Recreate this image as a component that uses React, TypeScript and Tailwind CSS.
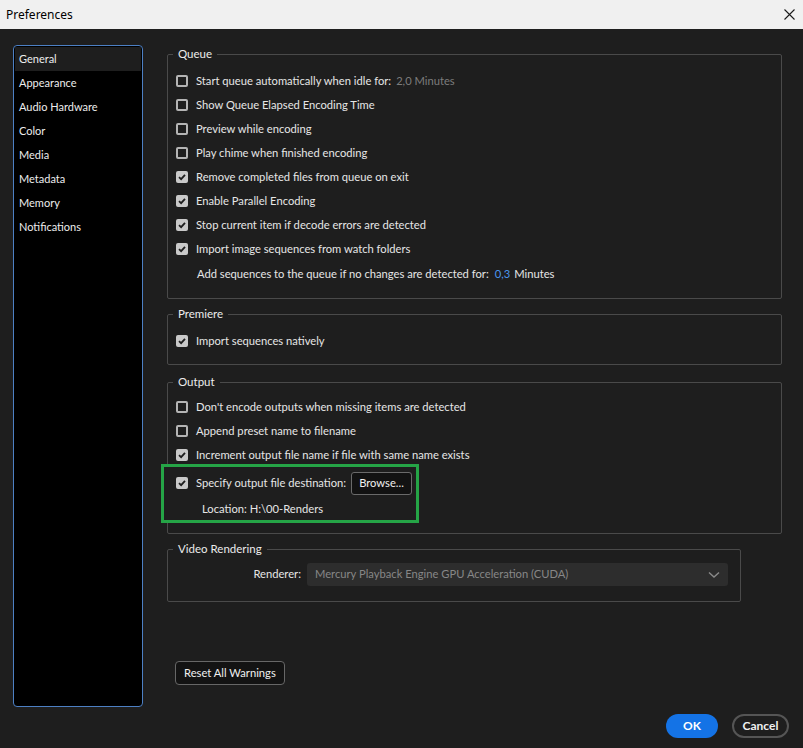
import type { ReactNode } from 'react';

const FONT = "font-['Lato','Noto_Sans',sans-serif]";

function Box({ checked }: { checked?: boolean }) {
    if (checked) {
        return (
            <span className="w-[12px] h-[12px] rounded-[2px] bg-[#c9c9c9] flex items-center justify-center shrink-0">
                <svg width="10" height="10" viewBox="0 0 10 10">
                    <path d="M2 5.2 L4.1 7.2 L8 2.8" stroke="#1e1e1e" strokeWidth="1.8" fill="none" />
                </svg>
            </span>
        );
    }
    return <span className="w-[12px] h-[12px] rounded-[2px] border-2 border-[#b4b4b4] bg-[#1e1e1e] shrink-0" />;
}

function Row({ checked, children }: { checked?: boolean; children: ReactNode }) {
    return (
        <div className="h-[24px] flex items-center">
            <Box checked={checked} />
            <span className="ml-[8px] text-[11.2px] text-[#e6e6e6] whitespace-nowrap">{children}</span>
        </div>
    );
}

function Group({ title, className, children }: { title: string; className?: string; children: ReactNode }) {
    return (
        <fieldset className={`border border-[#4a4a4a] rounded-[2px] px-[8px] ${className ?? ''}`}>
            <legend className="-ml-[3px] px-[5px] h-[16px] leading-[16px] text-[11.5px] text-[#ececec]">{title}</legend>
            {children}
        </fieldset>
    );
}

const SIDEBAR = ['General', 'Appearance', 'Audio Hardware', 'Color', 'Media', 'Metadata', 'Memory', 'Notifications'];

export default function App() {
    return (
        <div className={`w-[803px] h-[748px] flex flex-col ${FONT}`}>
            {/* title bar */}
            <div className="h-[29px] bg-[#f0f0f0] flex items-center justify-between pl-[6px] pr-[8px]">
                <span className="text-[12px] text-black font-['Noto_Sans',sans-serif]">Preferences</span>
                <svg width="11" height="11" viewBox="0 0 11 11">
                    <path d="M0.5 0.5 L10.5 10.5 M10.5 0.5 L0.5 10.5" stroke="#1a1a1a" strokeWidth="1.1" />
                </svg>
            </div>

            <div className="flex-1 bg-[#1e1e1e] flex flex-col">
                <div className="flex pt-[16px]">
                    {/* sidebar */}
                    <div className="ml-[13px] w-[130px] h-[662px] bg-black border border-[#4d80c4] rounded-[4px] p-[1px] shrink-0">
                        {SIDEBAR.map((s, i) => (
                            <div key={s} className={`h-[24px] flex items-center pl-[4px] text-[11px] text-[#ededed] ${i === 0 ? 'bg-[#1e1e1e]' : ''}`}>
                                {s}
                            </div>
                        ))}
                    </div>

                    {/* main */}
                    <div className="ml-[24px] w-[615px] pt-[1px] flex flex-col">
                        <Group title="Queue" className="pt-[7px] pb-[10px]">
                            <div className="h-[24px] flex items-center">
                                <Box />
                                <span className="ml-[8px] text-[11.2px] text-[#e6e6e6]">Start queue automatically when idle for:</span>
                                <span className="ml-[5px] text-[11.2px] text-[#7c7c7c]">2,0 Minutes</span>
                            </div>
                            <Row>Show Queue Elapsed Encoding Time</Row>
                            <Row>Preview while encoding</Row>
                            <Row>Play chime when finished encoding</Row>
                            <Row checked>Remove completed files from queue on exit</Row>
                            <Row checked>Enable Parallel Encoding</Row>
                            <Row checked>Stop current item if decode errors are detected</Row>
                            <Row checked>Import image sequences from watch folders</Row>
                            <div className="h-[27px] flex items-center pl-[21px] text-[11.2px] text-[#e6e6e6]">
                                Add sequences to the queue if no changes are detected for:
                                <span className="ml-[6px] text-[#4b96ee]">0,3</span>
                                <span className="ml-[4px]">Minutes</span>
                            </div>
                        </Group>

                        <Group title="Premiere" className="mt-[7px] pt-[7px] pb-[11px]">
                            <Row checked>Import sequences natively</Row>
                        </Group>

                        <Group title="Output" className="mt-[9px] pt-[5px] pb-[10px]">
                            <Row>Don&apos;t encode outputs when missing items are detected</Row>
                            <Row>Append preset name to filename</Row>
                            <Row checked>Increment output file name if file with same name exists</Row>
                            <div className="relative -mt-[3px] -ml-[15px] w-[258px] border-[3px] border-[#25a446] bg-[#1e1e1e] pl-[12px] pb-[1px]">
                                <div className="h-[32px] flex items-center">
                                    <Box checked />
                                    <span className="ml-[8px] text-[11.2px] text-[#e6e6e6] whitespace-nowrap">Specify output file destination:</span>
                                    <span className="ml-[5px] h-[23px] px-[7px] flex items-center rounded-[3px] border border-[#6a6a6a] bg-[#121212] text-[11.2px] text-[#f0f0f0]">
                                        Browse...
                                    </span>
                                </div>
                                <div className="h-[20px] flex items-center pl-[26px] text-[11.2px] text-[#e6e6e6]">Location: H:\00-Renders</div>
                            </div>
                        </Group>

                        <Group title="Video Rendering" className="mt-[7px] w-[574px] pt-[6px] pb-[15px]">
                            <div className="flex items-center">
                                <span className="w-[125px] text-right text-[11.2px] text-[#e6e6e6]">Renderer:</span>
                                <div className="ml-[6px] w-[421px] h-[23px] bg-[#2d2d2d] rounded-[3px] flex items-center justify-between pl-[8px] pr-[8px]">
                                    <span className="text-[11.2px] text-[#878787]">Mercury Playback Engine GPU Acceleration (CUDA)</span>
                                    <svg width="12" height="8" viewBox="0 0 12 8">
                                        <path d="M1 1.5 L6 6 L11 1.5" stroke="#8a8a8a" strokeWidth="1.4" fill="none" />
                                    </svg>
                                </div>
                            </div>
                        </Group>

                        <div className="mt-[59px] ml-[8px] flex">
                            <span className="flex items-center h-[24px] px-[8px] rounded-[4px] border border-[#676767] bg-[#131313] text-[11.2px] text-[#f0f0f0]">
                                Reset All Warnings
                            </span>
                        </div>
                    </div>
                </div>

                {/* footer */}
                <div className="mt-[7px] flex justify-end gap-[14px] pr-[14px]">
                    <span className="w-[52px] h-[24px] rounded-full bg-[#1473e6] flex items-center justify-center text-[12px] font-bold text-white">OK</span>
                    <span className="w-[57px] h-[24px] rounded-full border-2 border-[#555555] flex items-center justify-center text-[12px] font-bold text-[#f0f0f0]">Cancel</span>
                </div>
            </div>
        </div>
    );
}
